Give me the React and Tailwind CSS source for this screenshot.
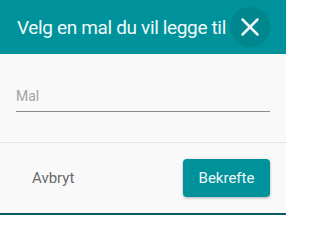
import { X } from "lucide-react";

export default function App() {
  return (
    <div className="w-[286px] h-[215px] flex flex-col bg-[#f9f9f9] border-b-2 border-[#0b5c61] font-['Roboto',sans-serif] overflow-hidden">
      {/* Header */}
      <div className="h-[54px] shrink-0 bg-[#00929a] flex items-center justify-between pl-[17px] pr-4">
        <h2 className="text-[19px] text-[#f1fafa] leading-none tracking-[-0.35px] whitespace-nowrap">
          Velg en mal du vil legge til
        </h2>
        <button className="w-10 h-10 shrink-0 rounded-full bg-[#00878e] flex items-center justify-center text-[#eef7f7]">
          <X size={30} strokeWidth={2} />
        </button>
      </div>

      {/* Body */}
      <div className="h-[89px] shrink-0 px-4 pt-[30px] border-b border-[#e2e2e2]">
        <input
          placeholder="Mal"
          className="w-full h-[26px] bg-transparent border-b border-[#8c8c8c] text-[14px] text-[#444] placeholder:text-[#a3a3a3] outline-none pb-1"
        />
      </div>

      {/* Footer */}
      <div className="flex-1 flex items-center justify-between pl-4 pr-4">
        <button className="h-[38px] px-4 text-[15px] text-[#6a6a6a]">Avbryt</button>
        <button className="w-[87px] h-[38px] rounded-[4px] bg-[#00929a] text-[15px] text-[#eef8f8] shadow-[0_1px_3px_rgba(0,0,0,0.3)]">
          Bekrefte
        </button>
      </div>
    </div>
  );
}
